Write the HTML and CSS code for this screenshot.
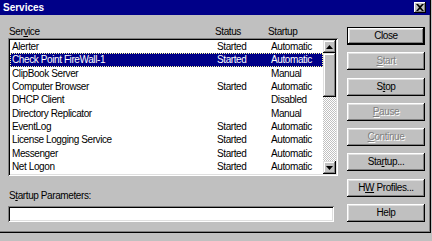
FILE: index.html
```html
<!DOCTYPE html>
<html>
<head>
<meta charset="utf-8">
<link rel="stylesheet" href="styles.css">
</head>
<body>
<div class="window">
  <div class="titlebar">
    <span class="title">Services</span>
    <span class="xbtn"><svg width="8" height="7" viewBox="0 0 8 7"><path d="M0 0h2l2 2 2-2h2L5 3.5 8 7H6L4 5 2 7H0l3-3.5z" fill="#000"/></svg></span>
  </div>
  <div class="content">
    <div class="left">
      <div class="header">
        <span>Ser<u>v</u>ice</span><span>Status</span><span>Startup</span>
      </div>
      <div class="listbox">
        <div class="rows">
          <div class="row"><span>Alerter</span><span>Started</span><span>Automatic</span></div>
          <div class="row sel"><span>Check Point FireWall-1</span><span>Started</span><span>Automatic</span></div>
          <div class="row"><span>ClipBook Server</span><span></span><span>Manual</span></div>
          <div class="row"><span>Computer Browser</span><span>Started</span><span>Automatic</span></div>
          <div class="row"><span>DHCP Client</span><span></span><span>Disabled</span></div>
          <div class="row"><span>Directory Replicator</span><span></span><span>Manual</span></div>
          <div class="row"><span>EventLog</span><span>Started</span><span>Automatic</span></div>
          <div class="row"><span>License Logging Service</span><span>Started</span><span>Automatic</span></div>
          <div class="row"><span>Messenger</span><span>Started</span><span>Automatic</span></div>
          <div class="row"><span>Net Logon</span><span>Started</span><span>Automatic</span></div>
        </div>
        <div class="scrollbar">
          <div class="sbtn"><svg width="7" height="4" viewBox="0 0 7 4"><path d="M3.5 0L7 4H0z" fill="#000"/></svg></div>
          <div class="thumb"></div>
          <div class="track"></div>
          <div class="sbtn"><svg width="7" height="4" viewBox="0 0 7 4"><path d="M0 0h7L3.5 4z" fill="#000"/></svg></div>
        </div>
      </div>
      <div class="plabel">S<u>t</u>artup Parameters:</div>
      <div class="field"></div>
    </div>
    <div class="buttons">
      <div class="btn default"><span>Close</span></div>
      <div class="btn disabled"><span><u>S</u>tart</span></div>
      <div class="btn"><span>S<u>t</u>op</span></div>
      <div class="btn disabled"><span><u>P</u>ause</span></div>
      <div class="btn disabled"><span><u>C</u>ontinue</span></div>
      <div class="btn"><span>Sta<u>r</u>tup...</span></div>
      <div class="btn"><span>H<u>W</u> Profiles...</span></div>
      <div class="btn"><span>Help</span></div>
    </div>
  </div>
</div>
</body>
</html>
```

FILE: styles.css
```css
html, body {
  margin: 0;
  padding: 0;
  background: #c0c0c0;
}
body {
  width: 432px;
  height: 241px;
  overflow: hidden;
  font-family: "Liberation Sans", Arial, sans-serif;
  font-size: 10px;
  letter-spacing: -0.4px;
  color: #000;
}
.window {
  width: 430px;
  height: 232px;
  background: #c0c0c0;
  border-right: 1px solid #000;
  border-bottom: 1px solid #000;
  box-shadow: inset -1px -1px #808080;
}
.titlebar {
  height: 15px;
  background: #000088;
  display: flex;
  align-items: center;
  justify-content: space-between;
  padding: 0 3px 0 3px;
  box-sizing: border-box;
}
.title {
  color: #fff;
  font-weight: bold;
  font-size: 10px;
  letter-spacing: 0;
}
.xbtn {
  width: 12px;
  height: 11px;
  background: #c0c0c0;
  box-shadow: inset -1px -1px #000, inset 1px 1px #fff, inset -2px -2px #808080;
  display: flex;
  align-items: center;
  justify-content: center;
  margin-right: 1px;
}
.content {
  display: flex;
  padding: 0 0 0 8px;
}
.left {
  width: 330px;
  display: flex;
  flex-direction: column;
}
.header {
  margin-top: 10px;
  height: 13px;
  line-height: 13px;
  display: grid;
  grid-template-columns: 206px 53px 1fr;
  padding-left: 1px;
}
.listbox {
  height: 138px;
  box-sizing: border-box;
  padding: 2px;
  background: #fff;
  box-shadow: inset 1px 1px #808080, inset -1px -1px #fff, inset 2px 2px #000, inset -2px -2px #dfdfdf;
  display: flex;
}
.rows {
  flex: 1;
  overflow: hidden;
}
.row {
  height: 13.33px;
  line-height: 13.33px;
  display: grid;
  grid-template-columns: 205px 54px 1fr;
  padding-left: 2px;
  white-space: nowrap;
  box-sizing: border-box;
}
.row.sel {
  background: #000088;
  color: #fff;
  outline: 1px dotted #ffff99;
  outline-offset: -1px;
}
.scrollbar {
  width: 13px;
  display: flex;
  flex-direction: column;
  background-color: #e8e8e8;
  background-image: repeating-conic-gradient(#c0c0c0 0 25%, #fff 0 50%);
  background-size: 2px 2px;
}
.sbtn, .thumb {
  background: #c0c0c0;
  box-shadow: inset -1px -1px #000, inset 1px 1px #dfdfdf, inset -2px -2px #808080, inset 2px 2px #fff;
}
.sbtn {
  height: 13px;
  display: flex;
  align-items: center;
  justify-content: center;
}
.thumb {
  height: 44px;
}
.track {
  flex: 1;
}
.plabel {
  margin-top: 13px;
  height: 13px;
  line-height: 13px;
  padding-left: 1px;
}
.field {
  margin-top: 4px;
  width: 326px;
  height: 16px;
  background: #fff;
  box-shadow: inset 1px 1px #808080, inset -1px -1px #fff, inset 2px 2px #000, inset -2px -2px #dfdfdf;
}
.buttons {
  margin-left: 9px;
  margin-top: 12px;
  display: flex;
  flex-direction: column;
  gap: 7.3px;
}
.btn {
  width: 78px;
  height: 18px;
  box-sizing: border-box;
  background: #c0c0c0;
  box-shadow: inset -1px -1px #000, inset 1px 1px #fff, inset -2px -2px #808080, inset 2px 2px #dfdfdf;
  display: flex;
  align-items: center;
  justify-content: center;
  line-height: 12px;
}
.btn.default {
  box-shadow: inset 0 0 0 1px #000, inset -2px -2px #000, inset 2px 2px #fff, inset -3px -3px #808080, inset 3px 3px #dfdfdf;
}
.btn.disabled {
  color: #808080;
  text-shadow: 1px 1px #fff;
}
```
